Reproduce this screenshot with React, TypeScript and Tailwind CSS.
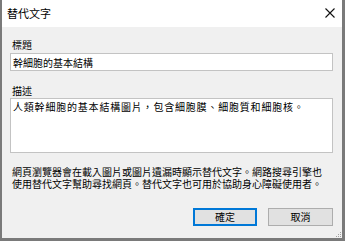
import React from "react";

const font = { fontFamily: '"Noto Sans CJK TC", "Noto Sans", sans-serif' };

const App = () => {
  return (
    <div
      className="w-[345px] h-[241px] flex flex-col bg-[#f0f0f0] border-l-2 border-r-[3px] border-b-[3px] border-[#7a7a7a] text-black overflow-hidden"
      style={font}
    >
      {/* header */}
      <div className="h-[27px] bg-white flex items-center justify-between pl-[5px] pr-[7px]">
        <span className="text-[11px] leading-none">替代文字</span>
        <svg width="10" height="10" viewBox="0 0 10 10" className="mt-[-1px]">
          <path d="M0.5 0.5 L9.5 9.5 M9.5 0.5 L0.5 9.5" stroke="#111" strokeWidth="1.1" />
        </svg>
      </div>

      <div className="flex-1 flex flex-col pl-2 pr-[9px] pt-[11px] relative">
        <label className="text-[10px] leading-[14px] pl-[2px] mb-px">標題</label>
        <div className="h-[18px] bg-white border border-[#c3c3c3] flex items-center px-[2px] text-[10px]">
          幹細胞的基本結構
        </div>

        <label className="text-[10px] leading-[14px] pl-[2px] mt-[13px]">描述</label>
        <div className="h-[55px] bg-white border border-[#c3c3c3] px-[2px] pt-px text-[10px] leading-[14px] tracking-[0.8px]">
          人類幹細胞的基本結構圖片，包含細胞膜、細胞質和細胞核。
        </div>

        <div className="text-[10px] leading-[12px] pl-[2px] mt-[13px] flex flex-col">
          <span className="h-[12px]">網頁瀏覽器會在載入圖片或圖片遺漏時顯示替代文字。網路搜尋引擎也</span>
          <span className="h-[12px]">使用替代文字幫助尋找網頁。替代文字也可用於協助身心障礙使用者。</span>
        </div>

        <div className="flex justify-end gap-[11px] mt-[18px]">
          <button className="w-[64px] h-[18px] bg-[#e1e1e1] border-2 border-[#0078d7] text-[10px] leading-none flex items-center justify-center">
            確定
          </button>
          <button className="w-[65px] h-[18px] bg-[#e1e1e1] border border-[#adadad] text-[10px] leading-none flex items-center justify-center">
            取消
          </button>
        </div>

        {/* resize grip */}
        <svg width="6" height="6" viewBox="0 0 6 6" className="absolute right-0 bottom-0">
          <rect x="4" y="0" width="1" height="1" fill="#a0a0a0" />
          <rect x="2" y="2" width="1" height="1" fill="#a0a0a0" />
          <rect x="4" y="2" width="1" height="1" fill="#a0a0a0" />
          <rect x="0" y="4" width="1" height="1" fill="#a0a0a0" />
          <rect x="2" y="4" width="1" height="1" fill="#a0a0a0" />
          <rect x="4" y="4" width="1" height="1" fill="#a0a0a0" />
        </svg>
      </div>
    </div>
  );
};

export default App;
